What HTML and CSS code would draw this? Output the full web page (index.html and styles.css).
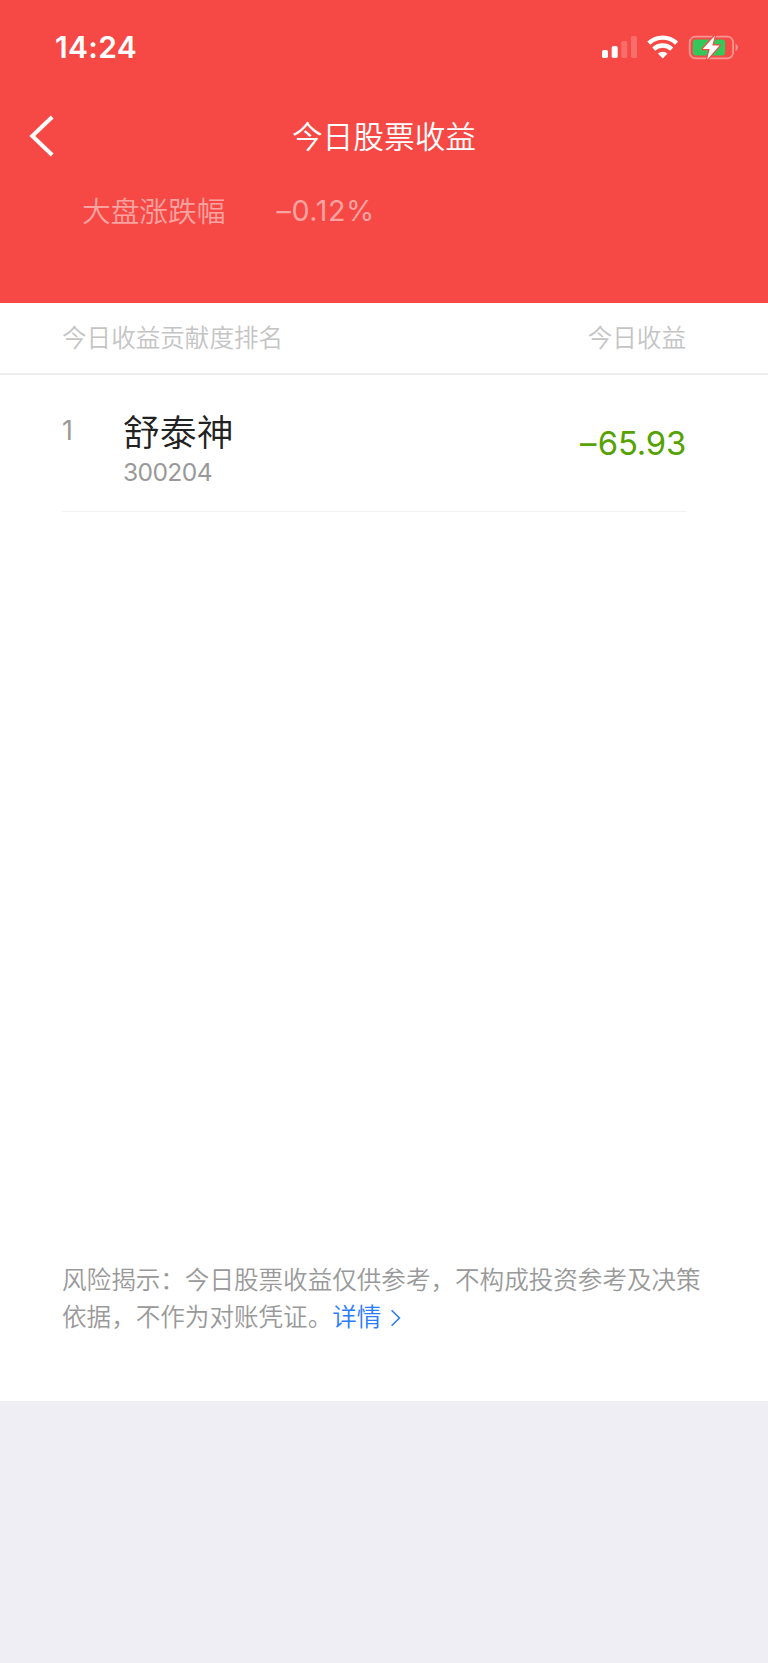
FILE: index.html
```html
<!DOCTYPE html>
<html lang="zh-CN">
<head>
<meta charset="utf-8">
<title>今日股票收益</title>
<link rel="stylesheet" href="styles.css">
</head>
<body>
<header class="hero">
  <div class="status">
    <span class="time">14:24</span>
    <svg class="status-icons" width="138" height="28" viewBox="0 0 138 28">
      <g fill="#fff">
        <rect x="2" y="17" width="6" height="8" rx="1.8"/>
        <rect x="11.7" y="13" width="6" height="12" rx="1.8"/>
        <g opacity=".2">
          <rect x="21.3" y="8" width="6" height="17" rx="1.8"/>
          <rect x="31" y="3" width="6" height="22" rx="1.8"/>
        </g>
        <path d="M62.7 25.5l-4.8-4.9a7 7 0 0 1 9.6 0z"/>
      </g>
      <g fill="none" stroke="#fff" stroke-width="4.4">
        <path d="M48.8 10.1a20.3 20.3 0 0 1 27.8 0"/>
        <path d="M53.7 16.1a13.2 13.2 0 0 1 18 0"/>
      </g>
      <rect x="89.7" y="3.7" width="43.4" height="21.6" rx="5.6" fill="none" stroke="#fff" stroke-opacity=".42" stroke-width="1.8"/>
      <path d="M135.6 10.6a4.4 4.4 0 0 1 0 7.6z" fill="#fff" fill-opacity=".45"/>
      <rect x="92.8" y="6.6" width="32.3" height="15.8" rx="3" fill="#34c759"/>
      <path d="M115 2.4L102.7 16h7l-2.7 10.8L119.6 12.4h-7.3z" fill="#fff" stroke="#f64945" stroke-width="2.4" paint-order="stroke" stroke-linejoin="round"/>
    </svg>
  </div>
  <nav class="nav">
    <svg class="back" width="26" height="42" viewBox="0 0 26 42"><path d="M23.2 2L3.3 21 23.2 40" fill="none" stroke="#fff" stroke-width="4"/></svg>
    <h1 class="title">今日股票收益</h1>
  </nav>
  <div class="market"><span>大盘涨跌幅</span><span class="market-value">–0.12%</span></div>
</header>
<main class="sheet">
  <div class="columns"><span>今日收益贡献度排名</span><span>今日收益</span></div>
  <div class="stock">
    <span class="rank">1</span>
    <div class="info">
      <div class="name">舒泰神</div>
      <div class="code">300204</div>
    </div>
    <span class="profit"><span class="sign">–</span>65.93</span>
  </div>
  <p class="notice">风险揭示：今日股票收益仅供参考，不构成投资参考及决策依据，不作为对账凭证。<a class="more">详情<svg class="more-icon" width="12" height="18" viewBox="0 0 12 18"><path d="M1.6 1.3L9.4 9 1.6 16.7" fill="none" stroke="#2a7cff" stroke-width="1.6"/></svg></a></p>
</main>
</body>
</html>
```

FILE: styles.css
```css
* { box-sizing: border-box; }
body {
  margin: 0;
  min-height: 1663px;
  background: #efeef4;
  font-family: "Noto Sans CJK SC", sans-serif;
  font-weight: 350;
}
.hero { height: 303px; background: #f64945; color: #fff; }
.status {
  height: 94px;
  padding: 0 30px 0 55px;
  display: flex;
  justify-content: space-between;
  align-items: center;
}
.time { font: 600 30px/36px Inter, sans-serif; letter-spacing: 0.3px; }
.status-icons { display: block; }
.nav {
  height: 84px;
  padding: 0 29px;
  display: grid;
  grid-template-columns: 26px 1fr 26px;
  align-items: center;
}
.title {
  margin: 0 0 3px;
  text-align: center;
  font-size: 30.7px;
  line-height: 40px;
  font-weight: 350;
}
.market {
  padding: 12px 0 0 82px;
  display: flex;
  gap: 51px;
  font-size: 28.7px;
  line-height: 40px;
  color: #fba3a1;
}
.market-value {
  padding-top: 1px;
  font-family: Inter, sans-serif;
  font-weight: 400;
  font-feature-settings: "calt" 0;
  letter-spacing: 0.6px;
}
.sheet {
  height: 1098px;
  background: #fff;
  display: flex;
  flex-direction: column;
}
.columns {
  height: 72px;
  padding: 15px 82px 0 62px;
  display: flex;
  justify-content: space-between;
  border-bottom: 2px solid #ececec;
  font-size: 24.57px;
  line-height: 37px;
  color: #c4c4c4;
}
.stock {
  height: 137px;
  margin: 0 81px 0 62px;
  padding-top: 31px;
  display: flex;
  border-bottom: 1px solid #f2f2f2;
}
.rank {
  width: 61px;
  font: 400 26.6px/49px Inter, sans-serif;
  color: #999;
}
.info { flex: 1; }
.name { font-size: 36.86px; line-height: 48px; color: #222; }
.code { font: 400 24.57px/36px Inter, sans-serif; letter-spacing: -0.6px; color: #999; }
.profit {
  padding-right: 1px;
  font: 400 32.8px/74px Inter, sans-serif;
  font-feature-settings: "calt" 0;
  letter-spacing: -0.2px;
  color: #55a200;
}
.sign { margin-right: 1.5px; }
.notice {
  margin: auto 66px 67px 62px;
  font-size: 24.57px;
  line-height: 37px;
  color: #999;
}
.more { color: #2a7cff; }
.more-icon { margin-left: 9px; vertical-align: -0.5px; }
```
